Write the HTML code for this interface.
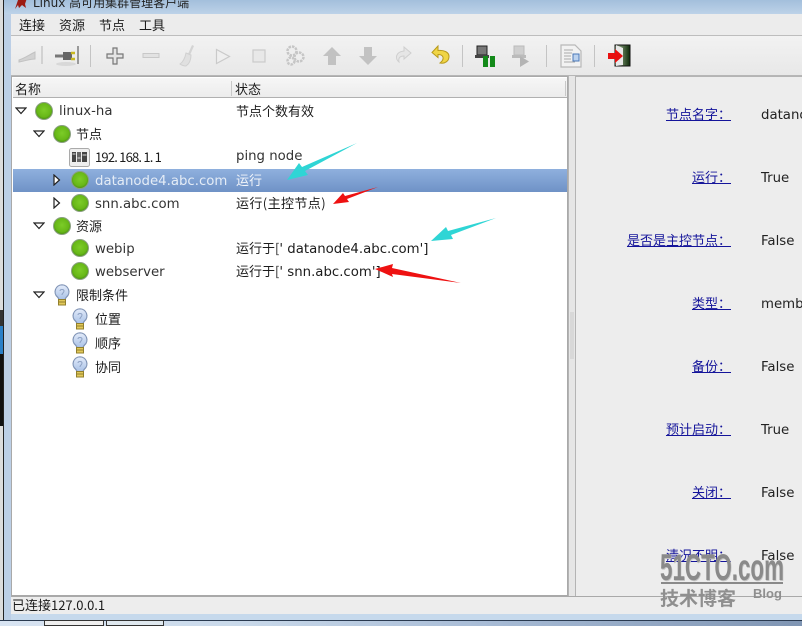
<!DOCTYPE html>
<html><head><meta charset="utf-8">
<style>
html,body{margin:0;padding:0}
body{width:802px;height:626px;overflow:hidden;position:relative;background:#c6d9ec;font-family:"DejaVu Sans","WenQuanYi Zen Hei","Noto Sans CJK SC",sans-serif;font-size:13px;color:#222}
.a{position:absolute}
.t{position:absolute;white-space:nowrap;line-height:16px;height:16px}
.z{font-family:"WenQuanYi Zen Hei","Noto Sans CJK SC",sans-serif;font-size:13px;color:#1c1c1c;margin-top:-1px}
.n{font-size:13.300px;color:#333;margin-top:1px}
.l{position:absolute;white-space:nowrap;line-height:16px;height:16px;right:71px;color:#14149a;text-decoration:underline;font-family:"WenQuanYi Zen Hei","Noto Sans CJK SC",sans-serif;font-size:13px;margin-top:-1px}
.v{position:absolute;left:185px;white-space:nowrap;line-height:16px;color:#222;font-size:13.300px;margin-top:1px}
svg{position:absolute;overflow:visible}
</style></head><body>
<svg width="0" height="0" style="position:absolute"><defs>
<radialGradient id="g" cx="50%" cy="45%" r="55%"><stop offset="0" stop-color="#7ccc28"/><stop offset=".72" stop-color="#68b818"/><stop offset="1" stop-color="#478f10"/></radialGradient>
<linearGradient id="b" x1="0" y1="0" x2="0" y2="1"><stop offset="0" stop-color="#e4ecfa"/><stop offset="1" stop-color="#a8c0e6"/></linearGradient>
<symbol id="dot" viewBox="0 0 18 18"><circle cx="9" cy="9" r="8.500" fill="url(#g)" stroke="#8aa080" stroke-width="1"/></symbol>
<symbol id="bulb" viewBox="0 0 18 22"><path d="M9 .8a7 7 0 0 0-4.500 12.300c1 1 1.500 1.500 1.500 2.700h6c0-1.200.5-1.700 1.500-2.700A7 7 0 0 0 9 .8z" fill="url(#b)" stroke="#7f93b5" stroke-width="1.200"/><path d="M7 7c0-2 4-2 4 0s-2 2-2 4" fill="none" stroke="#8ea2c4"/><rect x="5.500" y="15.500" width="7" height="5.500" fill="#e2c95a" stroke="#927f2c"/><path d="M5.500 18h7" stroke="#927f2c"/></symbol>
<symbol id="down" viewBox="0 0 12 8"><path d="M1 1h10L6 6.500z" fill="#fff" stroke="#222" stroke-width="1.200"/></symbol>
<symbol id="right" viewBox="0 0 8 12"><path d="M1 1v10l5.500-5z" fill="#fff" stroke="#222" stroke-width="1.200"/></symbol>
</defs></svg>

<!-- outer desktop edge -->
<div class="a" style="left:0;top:0;width:3px;height:626px;background:#dcdcdc"></div>
<div class="a" style="left:0;top:326px;width:3px;height:28px;background:#2a80c8"></div>
<div class="a" style="left:0;top:354px;width:3px;height:72px;background:#111"></div>
<div class="a" style="left:0;top:310px;width:3px;height:16px;background:#333"></div>
<div class="a" style="left:3px;top:0;width:1px;height:620px;background:#222"></div>
<div class="a" style="left:4px;top:0;width:7px;height:620px;background:#bccfe6"></div>

<!-- title -->
<div class="a" style="left:4px;top:0;width:798px;height:14px;background:linear-gradient(#a3bfdc,#bdd2e8)"></div>
<svg style="left:14px;top:-4px" width="14" height="14" viewBox="0 0 14 14"><path d="M1 13L4 4l3-3 2 3 4-2-2 6 1 4-4-3-3 3-1-3z" fill="#9c1c14"/></svg>
<div class="t" style="left:33px;top:-5px;font-size:12px;color:#222">Linux 高可用集群管理客户端</div>

<!-- menu -->
<div class="a" style="left:11px;top:14px;width:791px;height:21px;background:#ececec;border-bottom:1px solid #bdbdbd"></div>
<div class="t z" style="left:19px;top:18px">连接</div>
<div class="t z" style="left:59px;top:18px">资源</div>
<div class="t z" style="left:99px;top:18px">节点</div>
<div class="t z" style="left:139px;top:18px">工具</div>

<!-- toolbar -->
<div class="a" style="left:11px;top:36px;width:791px;height:39px;background:linear-gradient(#f2f2f2,#e8e8e8);border-bottom:2px solid #b6b6b6"></div>
<div class="a" style="left:90px;top:45px;width:1px;height:22px;background:#c4c4c4"></div>
<div class="a" style="left:462px;top:45px;width:1px;height:22px;background:#c4c4c4"></div>
<div class="a" style="left:546px;top:45px;width:1px;height:22px;background:#c4c4c4"></div>
<div class="a" style="left:594px;top:45px;width:1px;height:22px;background:#c4c4c4"></div>
<svg style="left:17px;top:44px" width="28" height="22" viewBox="0 0 28 22"><path d="M2 16C8 14 12 11 18 8l0 7c-5 0-10 2-16 3z" fill="#d2d2d2" stroke="#c2c2c2"/><path d="M25 2v18" stroke="#c8c8c8" stroke-width="1.500"/></svg>
<svg style="left:54px;top:44px" width="28" height="24" viewBox="0 0 28 24"><ellipse cx="12" cy="20" rx="10" ry="2" fill="#d8d8d8"/><path d="M1 12h8" stroke="#777" stroke-width="3"/><path d="M9 8h7a2 2 0 0 1 2 2v4a2 2 0 0 1-2 2H9z" fill="#666"/><path d="M17 9h4M17 15h4" stroke="#c8b820" stroke-width="2.500"/><path d="M24 2v18" stroke="#999" stroke-width="2"/></svg>
<svg style="left:106px;top:47px" width="18" height="18" viewBox="0 0 18 18"><path d="M7 1h4v6h6v4h-6v6H7v-6H1V7h6z" fill="#e4e4e4" stroke="#777" stroke-width="1.200"/></svg>
<svg style="left:142px;top:52px" width="18" height="8" viewBox="0 0 18 8"><rect x="1" y="1.500" width="16" height="4" fill="#e2e2e2" stroke="#c8c8c8"/></svg>
<svg style="left:178px;top:44px" width="18" height="24" viewBox="0 0 18 24"><path d="M14 1l2 1-4 9-2-1z" fill="#d4d4d4"/><path d="M8 9l5 2c0 5-2 9-5 11-2 0-5-1-6-2 3-2 5-6 6-11z" fill="#e0e0e0" stroke="#d0d0d0"/></svg>
<svg style="left:215px;top:48px" width="16" height="17" viewBox="0 0 16 17"><path d="M1.500 1.500v14l13-7z" fill="#efefef" stroke="#cacaca" stroke-width="1.200"/></svg>
<svg style="left:252px;top:49px" width="14" height="14" viewBox="0 0 14 14"><rect x="1" y="1" width="12" height="12" fill="#e8e8e8" stroke="#cacaca" stroke-width="1.200"/></svg>
<svg style="left:284px;top:44px" width="22" height="23" viewBox="0 0 22 23"><circle cx="8" cy="7" r="4.500" fill="#eee" stroke="#c6c6c6" stroke-width="2.500" stroke-dasharray="2.500 1"/><circle cx="15" cy="13" r="4.500" fill="#eee" stroke="#c6c6c6" stroke-width="2.500" stroke-dasharray="2.500 1"/><circle cx="7" cy="17" r="3.500" fill="#eee" stroke="#c6c6c6" stroke-width="2.500" stroke-dasharray="2.500 1"/></svg>
<svg style="left:322px;top:46px" width="20" height="20" viewBox="0 0 20 20"><path d="M10 1l9 9h-5v9H6v-9H1z" fill="#c2c2c2"/></svg>
<svg style="left:358px;top:46px" width="20" height="20" viewBox="0 0 20 20"><path d="M6 1h8v9h5l-9 9-9-9h5z" fill="#c2c2c2"/></svg>
<svg style="left:392px;top:46px" width="20" height="20" viewBox="0 0 20 20"><path d="M12 1l7 6-7 6v-3c-4 0-6 2-5 6-4-3-4-10 5-11z" fill="#e6e6e6" stroke="#cfcfcf"/></svg>
<svg style="left:431px;top:45px" width="19" height="21" viewBox="0 0 19 21"><path d="M7 1L1 7.500l6 5V9.500c4 0 5.500 2 5 4.500-.3 2-2 3-3 4 5 1 9-2 9-6.500C18 7 13 5 7 5.500z" fill="#f0d545" stroke="#b89a1c"/></svg>
<svg style="left:475px;top:45px" width="22" height="22" viewBox="0 0 22 22"><rect x="2" y="1" width="10" height="9" fill="#777" stroke="#222"/><rect x="0" y="10" width="14" height="3" fill="#444"/><rect x="8" y="11" width="5" height="11" fill="#138a1a"/><rect x="15" y="11" width="5" height="11" fill="#138a1a"/></svg>
<svg style="left:512px;top:45px" width="18" height="22" viewBox="0 0 18 22"><rect x="2" y="1" width="10" height="9" fill="#cfcfcf" stroke="#bbb"/><rect x="0" y="10" width="14" height="3" fill="#bbb"/><path d="M8 11v11l9-5.500z" fill="#b4b4b4"/></svg>
<svg style="left:560px;top:44px" width="22" height="24" viewBox="0 0 22 24"><path d="M1 1h14l6 6v16H1z" fill="#f2f2f2" stroke="#b8b8b8" stroke-width="1.200"/><path d="M4 6h9M4 9h8M4 12h7M4 15h7M4 18h11" stroke="#aaa"/><rect x="13" y="10" width="6" height="7" fill="#bcd2ee" stroke="#4a78b8"/></svg>
<svg style="left:608px;top:44px" width="24" height="23" viewBox="0 0 24 23"><defs><linearGradient id="dr" x1="0" x2="1" y1="0" y2="0"><stop offset="0" stop-color="#a9c29b"/><stop offset="1" stop-color="#0f2a0a"/></linearGradient></defs><rect x="7" y="1" width="15" height="21" fill="url(#dr)" stroke="#111"/><path d="M8 1l7 3v17l-7 1z" fill="#e8e8e8"/><path d="M0 9h7V5l8 7-8 7v-4H0z" fill="#e81010"/></svg>

<!-- tree panel -->
<div class="a" style="left:11px;top:76px;width:557px;height:520px;background:#fff;border:1px solid #a9a9a9;box-sizing:border-box"></div>
<div class="a" style="left:13px;top:78px;width:554px;height:20px;background:linear-gradient(#f6f6f6,#ececec);border-bottom:1px solid #b0b0b0;box-sizing:border-box"></div>
<div class="a" style="left:231px;top:81px;width:1px;height:15px;background:#c8c8c8"></div>
<div class="a" style="left:565px;top:81px;width:1px;height:15px;background:#c8c8c8"></div>
<div class="t z" style="left:15px;top:82px">名称</div>
<div class="t z" style="left:235px;top:82px">状态</div>

<div class="a" style="left:13px;top:169px;width:554px;height:23px;background:linear-gradient(#8fb0de,#6f92c6)"></div>

<!-- right panel -->
<div class="a" style="left:568px;top:76px;width:8px;height:521px;background:#e6e6e6;border-left:1px solid #b4b4b4;border-right:1px solid #b4b4b4;box-sizing:border-box"></div>
<div class="a" style="left:570px;top:312px;width:4px;height:47px;background-image:radial-gradient(#b0b0b0 .6px,transparent .7px);background-size:2px 2px"></div>
<div class="a" style="left:576px;top:76px;width:226px;height:521px;background:#ededed;border-top:1px solid #b4b4b4;box-sizing:border-box"></div>

<!-- tree rows -->
<svg style="left:15px;top:107px" width="12" height="8"><use href="#down"/></svg>
<svg style="left:35px;top:102px" width="18" height="18"><use href="#dot"/></svg>
<div class="t n" style="left:59px;top:103px">linux-ha</div>
<div class="t z" style="left:236px;top:104px">节点个数有效</div>

<svg style="left:33px;top:130px" width="12" height="8"><use href="#down"/></svg>
<svg style="left:53px;top:125px" width="18" height="18"><use href="#dot"/></svg>
<div class="t z" style="left:76px;top:127px">节点</div>

<svg style="left:69px;top:148px" width="21" height="19" viewBox="0 0 21 19"><rect x=".5" y=".5" width="20" height="18" rx="2" fill="#eee" stroke="#aaa"/><rect x="3" y="4" width="4" height="10" fill="#444"/><rect x="8" y="4" width="4" height="10" fill="#666"/><rect x="13" y="4" width="5" height="10" fill="#444"/><path d="M3.500 6h3M13.500 7h4M8.500 10h3" stroke="#ddd"/></svg>
<div class="t z" style="left:95px;top:150px;letter-spacing:-.8px">192. 168. 1. 1</div>
<div class="t n" style="left:236px;top:148px">ping node</div>

<svg style="left:53px;top:174px" width="8" height="12"><use href="#right"/></svg>
<svg style="left:71px;top:171px" width="18" height="18"><use href="#dot"/></svg>
<div class="t n" style="left:95px;top:173px;color:#e4ecf6">datanode4.abc.com</div>
<div class="t z" style="left:236px;top:173px;color:#f2f5fa">运行</div>

<svg style="left:53px;top:197px" width="8" height="12"><use href="#right"/></svg>
<svg style="left:71px;top:194px" width="18" height="18"><use href="#dot"/></svg>
<div class="t n" style="left:95px;top:196px">snn.abc.com</div>
<div class="t z" style="left:236px;top:196px;letter-spacing:.4px">运行(主控节点)</div>

<svg style="left:33px;top:222px" width="12" height="8"><use href="#down"/></svg>
<svg style="left:53px;top:217px" width="18" height="18"><use href="#dot"/></svg>
<div class="t z" style="left:76px;top:219px">资源</div>

<svg style="left:71px;top:239px" width="18" height="18"><use href="#dot"/></svg>
<div class="t n" style="left:95px;top:241px">webip</div>
<div class="t z" style="left:236px;top:241px"><span>运行于[</span><span style="font-family:'DejaVu Sans',sans-serif;font-size:13.300px">' datanode4.abc.com']</span></div>

<svg style="left:71px;top:262px" width="18" height="18"><use href="#dot"/></svg>
<div class="t n" style="left:95px;top:264px">webserver</div>
<div class="t z" style="left:236px;top:264px"><span>运行于[</span><span style="font-family:'DejaVu Sans',sans-serif;font-size:13.300px">' snn.abc.com']</span></div>

<svg style="left:33px;top:291px" width="12" height="8"><use href="#down"/></svg>
<svg style="left:53px;top:284px" width="18" height="22"><use href="#bulb"/></svg>
<div class="t z" style="left:76px;top:288px">限制条件</div>

<svg style="left:71px;top:308px" width="18" height="22"><use href="#bulb"/></svg>
<div class="t z" style="left:95px;top:312px">位置</div>
<svg style="left:71px;top:332px" width="18" height="22"><use href="#bulb"/></svg>
<div class="t z" style="left:95px;top:336px">顺序</div>
<svg style="left:71px;top:356px" width="18" height="22"><use href="#bulb"/></svg>
<div class="t z" style="left:95px;top:360px">协同</div>

<!-- annotation arrows -->
<svg style="left:0;top:0" width="802" height="626">
<path d="M357 143L305 171l3 4-21 5 12-17 3 4z" fill="#2fd5d5"/>
<path d="M378 187L347 199l2 3-16 2 10-11 2 3z" fill="#ee1111"/>
<path d="M496 218L451 235l2 4-22 2 15-14 2 4z" fill="#2fd5d5"/>
<path d="M461 283L392 274l1 3-18-8 18-5-1 4z" fill="#ee1111"/>
</svg>

<!-- right details -->
<div class="a" style="left:576px;top:77px;width:226px;height:519px;overflow:hidden">
<div class="l" style="top:30px">节点名字：</div><div class="v" style="top:30px">datanode4.abc.com</div>
<div class="l" style="top:93px">运行：</div><div class="v" style="top:93px">True</div>
<div class="l" style="top:156px">是否是主控节点：</div><div class="v" style="top:156px">False</div>
<div class="l" style="top:219px">类型：</div><div class="v" style="top:219px">member</div>
<div class="l" style="top:282px">备份：</div><div class="v" style="top:282px">False</div>
<div class="l" style="top:345px">预计启动：</div><div class="v" style="top:345px">True</div>
<div class="l" style="top:408px">关闭：</div><div class="v" style="top:408px">False</div>
<div class="l" style="top:471px">清况不明：</div><div class="v" style="top:471px">False</div>
</div>

<!-- status bar -->
<div class="a" style="left:11px;top:596px;width:791px;height:18px;background:#ededed;border-top:1px solid #a9a9a9;box-sizing:border-box"></div>
<div class="t z" style="left:12px;top:598px">已连接127.0.0.1</div>

<!-- watermark -->
<div class="a" style="left:655px;top:545px;width:147px;height:45px;overflow:hidden">
<div class="t" style="left:5px;top:2px;height:42px;line-height:42px;font-family:'Liberation Sans',sans-serif;font-weight:bold;font-size:37px;color:#8a8a8a;text-shadow:1px 1px 0 #c4c4c4;transform-origin:0 50%;transform:scaleX(.605);">51CTO.com</div>
</div>
<div class="a" style="left:661px;top:582px;width:122px;height:2px;background:#8a8a8a"></div>
<div class="t" style="left:660px;top:588px;height:20px;line-height:20px;font-family:'Noto Sans CJK SC',sans-serif;font-size:19px;font-weight:bold;color:#8f8f8f">技术博客</div>
<div class="t" style="left:753px;top:586px;font-family:'Liberation Sans',sans-serif;font-size:13px;font-weight:bold;color:#8f8f8f">Blog</div>

<!-- taskbar -->
<div class="a" style="left:0;top:620px;width:802px;height:6px;background:linear-gradient(90deg,#d8e4f2 0%,#c9d9ea 30%,#a8bcd6 60%,#7f95b3 100%);border-top:1px solid #2a3a50;box-sizing:border-box"></div>
<div class="a" style="left:44px;top:620px;width:60px;height:6px;background:#eee;border:1px solid #333;box-sizing:border-box"></div>
<div class="a" style="left:106px;top:620px;width:58px;height:6px;background:#dfe8ef;border:1px solid #333;box-sizing:border-box"></div>
</body></html>
